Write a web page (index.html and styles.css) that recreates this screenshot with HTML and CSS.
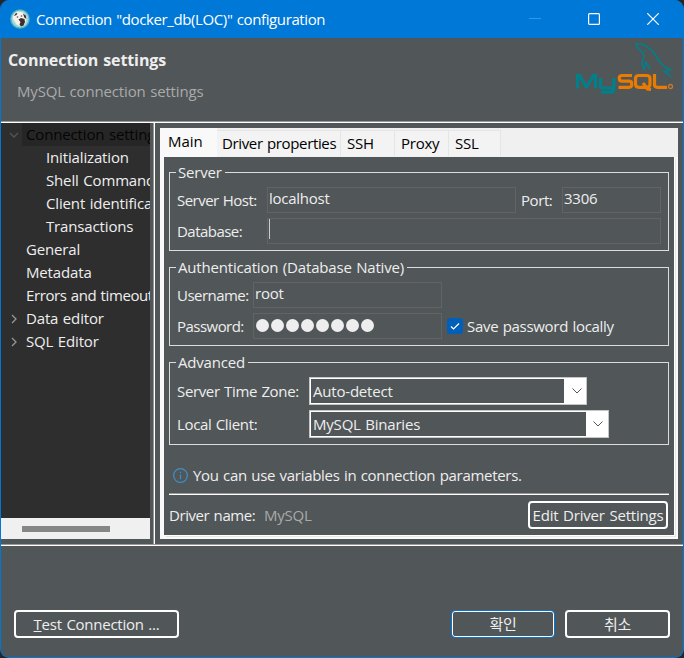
FILE: index.html
```html
<!DOCTYPE html>
<html lang="ko">
<head>
<meta charset="utf-8">
<title>Connection configuration</title>
<link rel="stylesheet" href="styles.css">
</head>
<body>
<div class="window">
  <header class="titlebar">
    <svg class="app-icon" viewBox="0 0 20 20">
      <circle cx="10" cy="10" r="9.8" fill="#4fb4c4"/>
      <circle cx="10" cy="10" r="8.500" fill="#a5d6d8"/>
      <path d="M3 10C2.500 5 6 2.500 9.500 2.700c4 .2 7 3 7 7L15 15l-4 2.500-4.500-2z" fill="#f5f1ee"/>
      <path d="M4 7l1.500-2.500L7.500 4 6.500 6zM13 4.500l2.800 2 .5 3.500-2-1.500zM8.500 10.500l2.500-1.500 3.500 1 .5 3-1.500 3.500-2.500 1-1.500-2 1-2.500z" fill="#3b302e"/>
      <circle cx="7.500" cy="8" r=".8" fill="#5b504e"/><circle cx="11.500" cy="7" r=".8" fill="#5b504e"/>
    </svg>
    <h1 class="title">Connection "docker_db(LOC)" configuration</h1>
    <div class="controls">
      <svg viewBox="0 0 12 12"><path class="dim" d="M0 5.500h12"/></svg>
      <svg viewBox="0 0 12 12"><rect x=".6" y=".6" width="10.800" height="10.800" rx="1"/></svg>
      <svg viewBox="0 0 12 12"><path d="M.3.300l11.400 11.400M11.700.300L.3 11.700"/></svg>
    </div>
  </header>

  <section class="heading">
    <div>
      <h2 class="heading-title">Connection settings</h2>
      <p class="heading-sub">MySQL connection settings</p>
    </div>
    <svg class="logo" viewBox="0 0 106 56">
      <g fill="none" stroke="#00808a" stroke-width="3.200">
        <path d="M5.500 48.500V35.500h2l6.500 11h1l6.500-11h2v13"/>
        <path d="M28.500 38v7.500q0 2.500 2.500 2.500h11M41.800 38v11.500q0 2.700-3 2.700H29"/>
      </g>
      <g fill="none" stroke="#e97b00" stroke-width="3.200">
        <path d="M60 35.500H50q-2.700 0-2.700 2.500v.5q0 2.700 2.700 2.700h7q2.700 0 2.700 2.600v1q0 2.500-2.700 2.500h-10.500"/>
        <path d="M67 35.500h7.500q3.500 0 3.500 3v5.500q0 3.300-3.500 3.300H67q-3.500 0-3.500-3.300v-5.500q0-3 3.500-3zM71 43l4.500 6 3.500 .5"/>
        <path d="M82.500 34v10.500q0 2.800 3 2.800H95"/>
      </g>
      <circle cx="98.500" cy="46.500" r="2" fill="none" stroke="#c9752a" stroke-width="1.300"/>
      <path class="dolphin" d="M99 37.500l-3.500-4-3.500-2 6.500-2-4.500-2-4.300-3.500-3.400-4-3.300-5.700q-3-4-6.700-6.600-4-3-7.600-4l-4.700 0 .5 2 1.800 2.600 5 5 .7 3.400-2.300 6.600 2.300 5.700 2-6.700 4 6.700"/>
      <circle cx="73.500" cy="10.500" r=".8" fill="#00808a"/>
    </svg>
  </section>

  <main class="content">
    <nav class="sidebar">
      <ul class="tree">
        <li class="selected"><svg class="twist" viewBox="0 0 10 10"><path d="M1 3l4 4 4-4"/></svg><span>Connection settings</span></li>
        <li class="child">Initialization</li>
        <li class="child">Shell Commands</li>
        <li class="child">Client identification</li>
        <li class="child">Transactions</li>
        <li>General</li>
        <li>Metadata</li>
        <li class="errors">Errors and timeouts</li>
        <li><svg class="twist" viewBox="0 0 10 10"><path d="M3 1l4 4-4 4"/></svg>Data editor</li>
        <li><svg class="twist" viewBox="0 0 10 10"><path d="M3 1l4 4-4 4"/></svg>SQL Editor</li>
      </ul>
      <div class="scrollbar"><div class="thumb"></div></div>
    </nav>
    <div class="pane">
      <div class="tabs">
        <div class="tab active">Main</div>
        <div class="tab props">Driver properties</div>
        <div class="tab ssh">SSH</div>
        <div class="tab proxy">Proxy</div>
        <div class="tab ssl">SSL</div>
      </div>
      <div class="page">
        <fieldset class="group server">
          <legend>Server</legend>
          <div class="row">
            <span class="label host-label">Server Host:</span><div class="field host">localhost</div>
            <span class="label port-label">Port:</span><div class="field port">3306</div>
          </div>
          <div class="row">
            <span class="label host-label">Database:</span><div class="field database"><i class="caret"></i></div>
          </div>
        </fieldset>
        <fieldset class="group auth">
          <legend>Authentication (Database Native)</legend>
          <div class="row">
            <span class="label user-label">Username:</span><div class="field user">root</div>
          </div>
          <div class="row">
            <span class="label user-label">Password:</span>
            <div class="field user dots"><i></i><i></i><i></i><i></i><i></i><i></i><i></i><i></i></div>
            <svg class="check" viewBox="0 0 16 16"><rect width="16" height="16" rx="3"/><path d="M4 8.500l2.500 2.500 5.500-5.500"/></svg>
            <span class="save">Save password locally</span>
          </div>
        </fieldset>
        <fieldset class="group advanced">
          <legend>Advanced</legend>
          <div class="row">
            <span class="label zone-label">Server Time Zone:</span>
            <div class="combo zone"><span>Auto-detect</span><svg viewBox="0 0 10 6"><path d="M.5.500L5 5 9.500.500"/></svg></div>
          </div>
          <div class="row">
            <span class="label zone-label">Local Client:</span>
            <div class="combo client"><span>MySQL Binaries</span><svg viewBox="0 0 10 6"><path d="M.5.500L5 5 9.500.500"/></svg></div>
          </div>
        </fieldset>
        <div class="hint">
          <svg viewBox="0 0 14 14"><circle cx="7" cy="7" r="6.400"/><path d="M7 6v4.500M7 3.500v1.200"/></svg>
          <span>You can use variables in connection parameters.</span>
        </div>
        <div class="driver">
          <span class="label driver-label">Driver name:</span><span class="driver-name">MySQL</span>
          <button class="button edit">Edit Driver Settings</button>
        </div>
      </div>
    </div>
  </main>

  <footer class="footer">
    <button class="button test"><span><u>T</u>est Connection ...</span></button>
    <button class="button ok">확인</button>
    <button class="button cancel">취소</button>
  </footer>
</div>
</body>
</html>
```
FILE: styles.css
```css
* { box-sizing: border-box; }
body {
  margin: 0;
  background: #22272b;
  color: #eeeeee;
  font: 15px/22px "Open Sans", "Noto Sans CJK KR", sans-serif;
  letter-spacing: -.25px;
  word-spacing: .8px;
  white-space: nowrap;
}
h1, h2, p, ul { margin: 0; padding: 0; }
.window {
  width: 684px;
  height: 658px;
  display: flex;
  flex-direction: column;
  overflow: hidden;
  border: 1px solid #0078d4;
  border-top: 0;
  border-radius: 9px;
  background: #515658;
}
.titlebar { height: 38px; display: flex; align-items: center; padding-left: 9px; background: #0078d7; }
.app-icon { width: 20px; height: 20px; margin-right: 6px; }
.title { color: #fff; font-size: 15px; font-weight: 400; letter-spacing: -.39px; }
.controls { display: flex; gap: 47px; margin-left: auto; margin-right: 24px; }
.controls svg { width: 12px; height: 12px; fill: none; stroke: #fff; stroke-width: 1.200; }
.controls .dim { stroke: #3995df; }

.heading { height: 85px; display: flex; justify-content: space-between; padding: 11px 5px 0 7px; box-shadow: inset 0 -1px #fff, inset 0 -2px #999; }
.heading-title { font-size: 16px; line-height: 22px; letter-spacing: -.08px; }
.heading-sub { margin: 9px 0 0 9px; color: #aaa; letter-spacing: -.15px; }
.logo { width: 106px; height: 56px; margin-top: -9px; }
.dolphin { fill: none; stroke: #00808a; stroke-width: 1.600; }

.content {
  height: 423px;
  display: flex;
  background: linear-gradient(90deg, #999 1px, #fff 1px) 152px 0 / 2px 100% no-repeat;
  box-shadow: inset 0 -1px #fff, inset 0 -2px #999;
}
.sidebar { width: 149px; height: 416px; display: flex; flex-direction: column; overflow: hidden; background: #2e2e2e; letter-spacing: -.15px; }
.tree { height: 395px; list-style: none; }
.tree li { height: 23px; padding-left: 25px; line-height: 23px; position: relative; }
.tree .child { padding-left: 45px; }
.tree .errors { letter-spacing: -.4px; }
.tree .selected { color: #050505; background: linear-gradient(#262626, #262626) 21px 0 / 140px 23px no-repeat; }
.twist { position: absolute; left: 8px; top: 7px; width: 10px; height: 10px; fill: none; stroke: #969696; stroke-width: 1.300; }
.selected .twist { stroke: #555; }
.scrollbar { height: 21px; padding: 8px 0 0 21px; background: #f0f0f0; }
.thumb { width: 88px; height: 6px; background: #868686; }
.pane { width: 518px; height: 411px; margin: 5px 0 0 10px; background: #f9f9f9; }

.tabs { height: 29px; display: flex; align-items: flex-end; background: #f0f0f0; color: #000; }
.tab { height: 26px; margin-bottom: 1px; padding: 0 0 0 6px; border-right: 1px solid #e5e5e5; border-top: 1px solid #e5e5e5; background: #f3f3f3; line-height: 24px; }
.tab.active { width: 57px; height: 29px; margin: 0; padding: 0 0 0 8px; border: 0; background: #f9f9f9; line-height: 27px; letter-spacing: 0; }
.tab.props { width: 124px; padding-left: 5px; letter-spacing: -.36px; }
.ssh { width: 54px; }
.proxy { width: 54px; }
.ssl { width: 52px; }
.page { width: 510px; height: 378px; margin-left: 4px; padding: 5px 5px 0; background: #515658; box-shadow: 1px 1px #fff, 2px 2px #e5e5e5; }

.group { margin: 0; padding: 0 7px; min-width: 0; border: 1px solid #dcdcdc; }
legend { height: 20px; margin: 0 0 0 -1px; padding: 0 3px 0 2px; line-height: 20px; letter-spacing: -.18px; }
.server { height: 89px; }
.auth { height: 89px; margin-top: 6px; }
.advanced { height: 93px; margin-top: 6px; }
.row { display: flex; align-items: center; height: 31px; }
.group .row:first-of-type { margin-top: 2px; }
.label { letter-spacing: -.42px; }
.host-label { width: 90px; }
.field { height: 26px; padding: 0 0 0 1px; border: 1px solid #636363; line-height: 20px; }
.host { width: 249px; }
.port-label { width: 46px; padding-left: 5px; }
.port { width: 99px; }
.database { width: 394px; }
.caret { display: block; width: 1px; height: 20px; background: #ccc; }
.user-label { width: 76px; }
.user-label, .host-label { letter-spacing: -.53px; }
.user { width: 189px; }
.dots { display: flex; align-items: center; gap: 2px; padding: 0 2px; }
.dots i { width: 13px; height: 13px; border-radius: 50%; background: #eee; }
.check { width: 16px; height: 16px; margin: 0 4px 0 5px; fill: none; stroke: #fff; stroke-width: 1.200; }
.check rect { fill: #005fb8; stroke: none; }
.save { letter-spacing: -.3px; }
.advanced .row { height: 33px; }
.zone-label { width: 132px; letter-spacing: -.35px; }
.combo { height: 28px; display: flex; align-items: center; justify-content: space-between; padding: 0 4px 0 2px; border: 2px solid #fff; border-radius: 1px; letter-spacing: -.2px; }
.combo svg { width: 10px; height: 6px; fill: none; stroke: #555; }
.zone { width: 278px; background: linear-gradient(#fff, #fff) right / 21px 100% no-repeat; }
.client { width: 300px; background: linear-gradient(#fff, #fff) right / 21px 100% no-repeat; }
.zone, .client { border-color: #fff; outline: 1px solid rgba(160, 160, 160, .6); outline-offset: -1px; }
.zone { padding-right: 3px; }
.hint { height: 49px; display: flex; align-items: center; padding: 11px 0 0 4px; letter-spacing: -.3px; }
.hint svg { width: 15px; height: 15px; margin-right: 5px; fill: none; stroke: #3d91cb; stroke-width: 1.100; }
.driver { display: flex; align-items: center; height: 41px; border-top: 1px solid #fff; box-shadow: 0 -1px #999; }
.driver-label { width: 95px; }
.driver-name { color: #aaa; }
.button { height: 28px; padding: 0; border: 2px solid #fff; border-radius: 4px; background: none; color: #eee; font: inherit; letter-spacing: -.25px; word-spacing: 1px; }
.edit { width: 140px; margin-left: auto; margin-right: 1px; letter-spacing: -.2px; }

.footer { height: 111px; display: flex; align-items: flex-start; padding: 64px 13px 0; }
.test { width: 165px; }
.ok { width: 104px; margin-left: auto; border: 1px solid #0078d4; box-shadow: inset 0 0 0 1px #fff; }
.cancel { width: 105px; margin-left: 10px; }
```
